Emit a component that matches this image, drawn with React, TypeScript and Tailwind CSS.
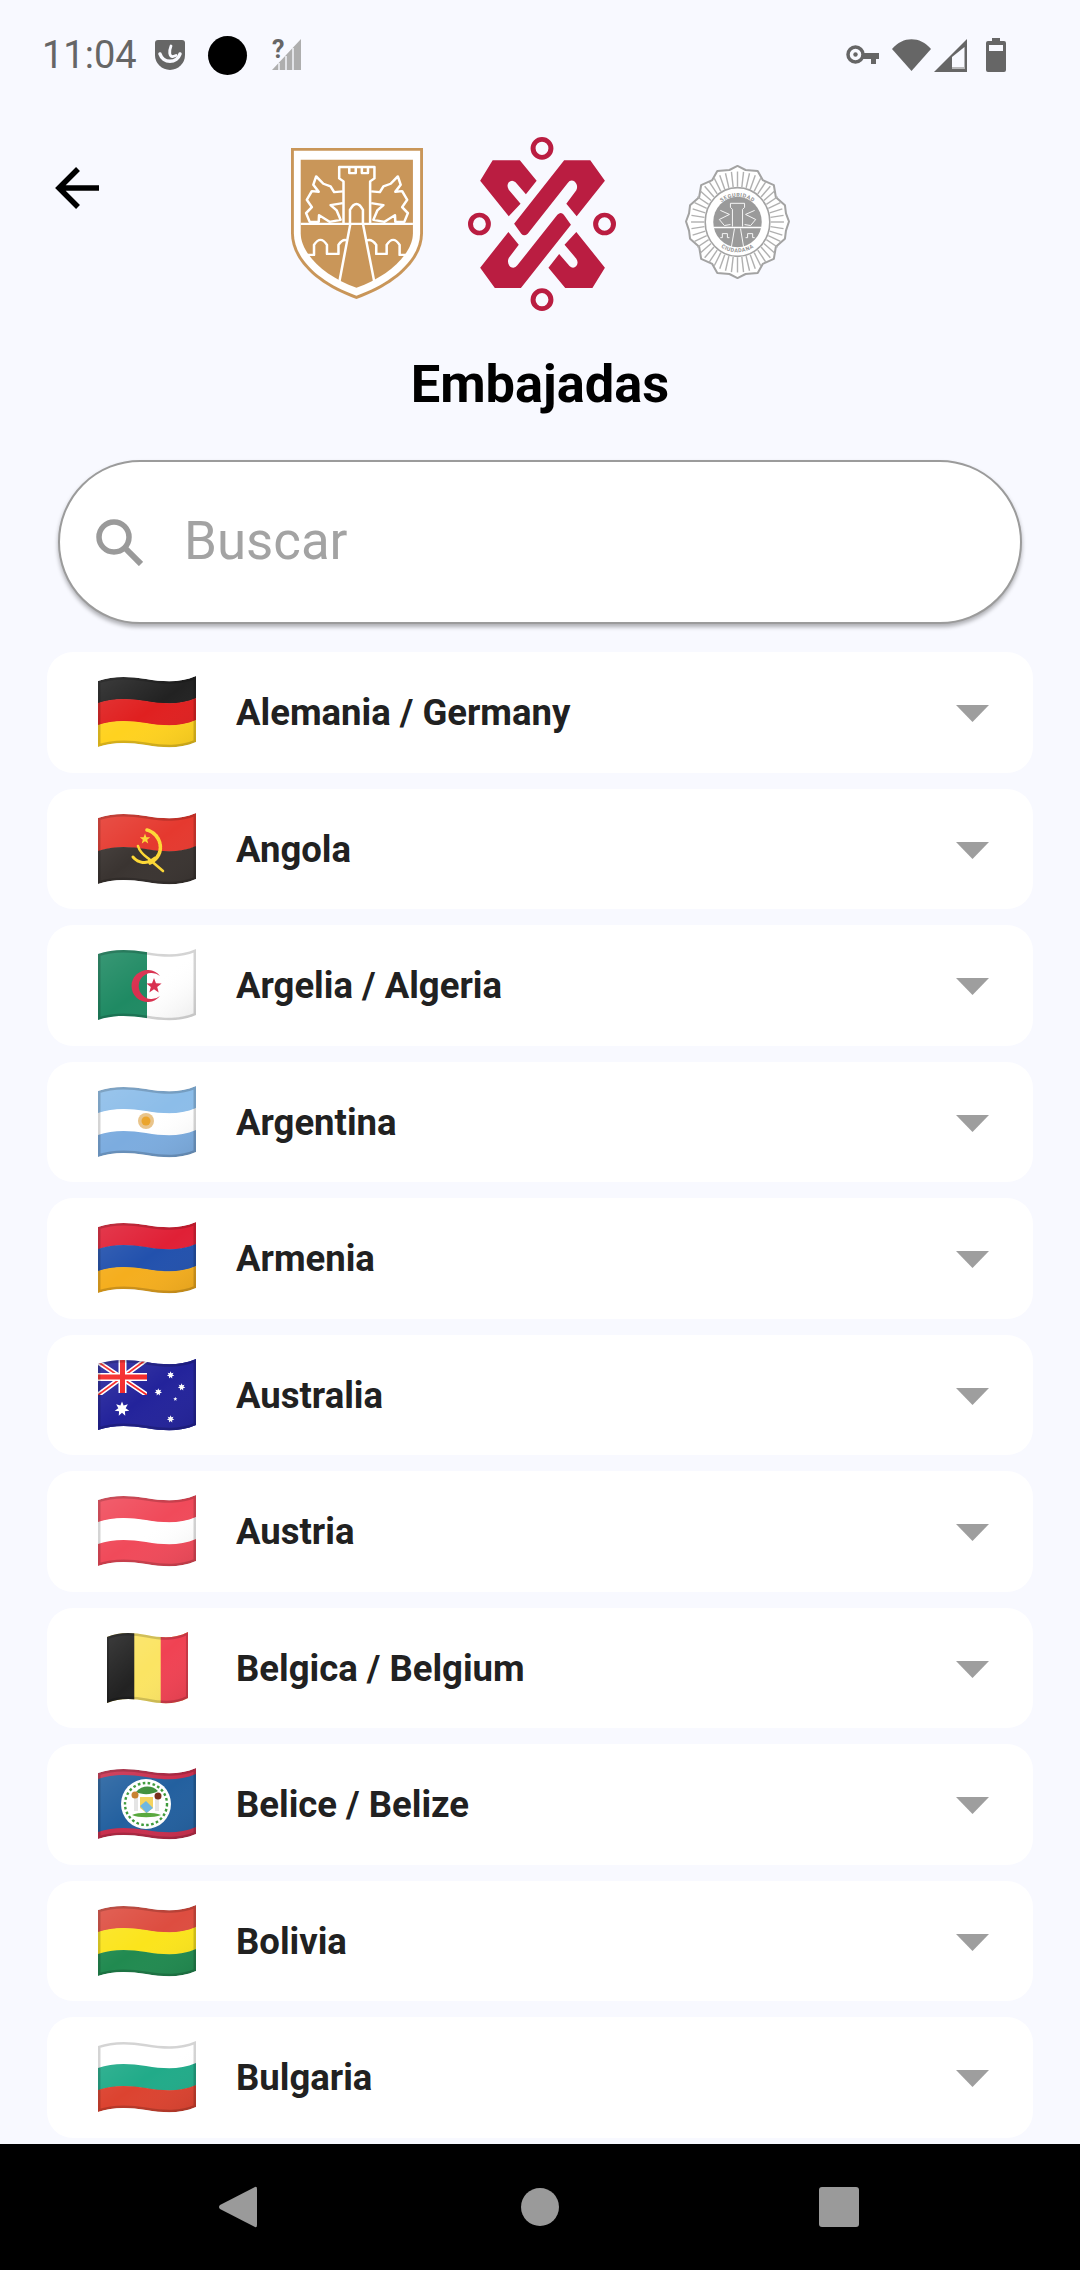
import type { ReactNode } from "react";

const waveBand = (a: number, b: number) =>
  `M0 ${a + 5} C14 ${a} 30 ${a} 48 ${a + 3} S82 ${a + 7} 98 ${a} L98 ${b} C82 ${b + 7} 66 ${b + 6} 48 ${b + 3} C30 ${b} 14 ${b} 0 ${b + 5} Z`;

const FLAG_OUTLINE = waveBand(0, 66);

const starPoints = (cx: number, cy: number, r: number, n = 5, inner = 0.42) =>
  Array.from({ length: n * 2 }, (_, i) => {
    const rad = i % 2 === 0 ? r : r * inner;
    const a = (Math.PI * i) / n - Math.PI / 2;
    return `${(cx + rad * Math.cos(a)).toFixed(2)},${(cy + rad * Math.sin(a)).toFixed(2)}`;
  }).join(" ");

function Flag({ id, narrow, children }: { id: string; narrow?: boolean; children: ReactNode }) {
  return (
    <div className="w-[98px] h-[72px] shrink-0 flex justify-center">
      <svg width={narrow ? 81 : 98} height={72} viewBox="0 0 98 72" preserveAspectRatio="none">
        <defs>
          <clipPath id={`clip-${id}`}>
            <path d={FLAG_OUTLINE} />
          </clipPath>
          <linearGradient id={`sheen-${id}`} x1="0" y1="0" x2="1" y2="1">
            <stop offset="0" stopColor="#ffffff" stopOpacity="0.12" />
            <stop offset="0.5" stopColor="#ffffff" stopOpacity="0" />
            <stop offset="1" stopColor="#000000" stopOpacity="0.08" />
          </linearGradient>
        </defs>
        <g clipPath={`url(#clip-${id})`}>
          {children}
          <rect width="98" height="72" fill={`url(#sheen-${id})`} />
          <path d={FLAG_OUTLINE} fill="none" stroke="#000000" strokeOpacity="0.17" strokeWidth="5" />
        </g>
      </svg>
    </div>
  );
}

function Stripes({ colors }: { colors: string[] }) {
  const h = 66 / colors.length;
  return (
    <>
      {colors.map((c, i) => (
        <path key={i} d={waveBand(i * h, (i + 1) * h + (i < colors.length - 1 ? 0.5 : 0))} fill={c} />
      ))}
    </>
  );
}

const flags: Record<string, ReactNode> = {
  de: (
    <Flag id="de">
      <Stripes colors={["#222222", "#e02020", "#ffd21f"]} />
    </Flag>
  ),
  ao: (
    <Flag id="ao">
      <Stripes colors={["#e5392f", "#3a3431"]} />
      <g fill="none" stroke="#fdd835" strokeLinecap="round">
        <path d="M49 17 C60 20 65 32 61 41 C59 45 56 48 52 50" strokeWidth="3.6" strokeDasharray="2.6 0.8" />
        <path d="M40 33 C42 40 47 43 51 46 L65 58" strokeWidth="2.6" />
        <path d="M35 44 C40 50 48 52 57 45" strokeWidth="3" strokeDasharray="2.6 0.8" />
      </g>
      <polygon points={starPoints(47, 26, 5.5)} fill="#fdd835" />
    </Flag>
  ),
  dz: (
    <Flag id="dz">
      <rect width="98" height="72" fill="#ffffff" />
      <rect width="49" height="72" fill="#1f8a63" />
      <path d="M62 27 A16 16 0 1 0 62 47 A13 13 0 1 1 62 27 Z" fill="#d9304f" />
      <polygon points={starPoints(56, 37, 8)} fill="#d9304f" />
    </Flag>
  ),
  ar: (
    <Flag id="ar">
      <Stripes colors={["#8cbde9", "#ffffff", "#7cacdf"]} />
      <circle cx="48" cy="35" r="8" fill="#e9c48a" />
      <circle cx="48" cy="35" r="4.5" fill="#eba52c" />
    </Flag>
  ),
  am: (
    <Flag id="am">
      <Stripes colors={["#e02036", "#2251ad", "#f5ae1e"]} />
    </Flag>
  ),
  au: (
    <Flag id="au">
      <rect width="98" height="72" fill="#23239b" />
      <g stroke="#ffffff" strokeWidth="5">
        <path d="M0 3 L49 36 M49 0 L0 36" />
      </g>
      <g stroke="#f52525" strokeWidth="1.8">
        <path d="M0 3 L49 36 M49 0 L0 36" />
      </g>
      <rect x="49" y="0" width="49" height="72" fill="#23239b" />
      <rect y="36" width="49" height="36" fill="#23239b" />
      <path d="M24.5 0 V34 M0 18 H49" stroke="#ffffff" strokeWidth="8" />
      <path d="M24.5 0 V34 M0 18 H49" stroke="#f52525" strokeWidth="5" />
      <polygon points={starPoints(24, 50, 7.5, 7, 0.5)} fill="#ffffff" />
      <polygon points={starPoints(72.6, 16, 3.8, 7, 0.5)} fill="#ffffff" />
      <polygon points={starPoints(83.6, 28, 3.8, 7, 0.5)} fill="#ffffff" />
      <polygon points={starPoints(60.3, 33, 3.8, 7, 0.5)} fill="#ffffff" />
      <polygon points={starPoints(77.3, 40, 2.2, 5)} fill="#ffffff" />
      <polygon points={starPoints(72.6, 60, 3.8, 7, 0.5)} fill="#ffffff" />
    </Flag>
  ),
  at: (
    <Flag id="at">
      <Stripes colors={["#f04a5a", "#ffffff", "#f04a5a"]} />
    </Flag>
  ),
  be: (
    <Flag id="be" narrow>
      <rect width="98" height="72" fill="#fbe463" />
      <rect width="33" height="72" fill="#222222" />
      <rect x="65" width="33" height="72" fill="#f04253" />
    </Flag>
  ),
  bz: (
    <Flag id="bz">
      <path d={waveBand(0, 66)} fill="#c92f4e" />
      <path d={waveBand(6, 59)} fill="#23609f" />
      <circle cx="48" cy="36" r="25" fill="#ffffff" />
      <circle cx="48" cy="36" r="21" fill="none" stroke="#3d9a3a" strokeWidth="2.4" strokeDasharray="2.6 2.4" />
      <path d="M38 24 C44 17 54 17 60 23 C54 27 44 27 38 24 Z" fill="#3f8f3c" />
      <rect x="36" y="27" width="4" height="16" fill="#e4e4e4" />
      <rect x="57" y="27" width="4" height="16" fill="#e4e4e4" />
      <circle cx="37" cy="27" r="3.5" fill="#c77f2b" />
      <circle cx="60" cy="28" r="3.5" fill="#7a2f1c" />
      <path d="M42 29 H55 V40 L48.5 45 L42 40 Z" fill="#f4d35e" />
      <path d="M42 38 L48 33 L55 40 L48.5 45 Z" fill="#6fb7e0" />
      <path d="M34 47 C40 44 56 44 63 47 C56 50 40 50 34 47 Z" fill="#58a83c" />
    </Flag>
  ),
  bo: (
    <Flag id="bo">
      <Stripes colors={["#dd4d40", "#fbe41c", "#218a50"]} />
    </Flag>
  ),
  bg: (
    <Flag id="bg">
      <Stripes colors={["#ffffff", "#21ab89", "#dc4330"]} />
    </Flag>
  ),
};

const embassies = [
  { code: "de", name: "Alemania / Germany" },
  { code: "ao", name: "Angola" },
  { code: "dz", name: "Argelia / Algeria" },
  { code: "ar", name: "Argentina" },
  { code: "am", name: "Armenia" },
  { code: "au", name: "Australia" },
  { code: "at", name: "Austria" },
  { code: "be", name: "Belgica / Belgium" },
  { code: "bz", name: "Belice / Belize" },
  { code: "bo", name: "Bolivia" },
  { code: "bg", name: "Bulgaria" },
];

function StatusBar() {
  return (
    <div className="h-[110px] shrink-0 flex items-start justify-between pt-[38px] pl-[42px] pr-[74px]">
      <div className="flex items-center h-[34px]">
        <span className="w-[95px] text-[38px] leading-none text-[#666666]">11:04</span>
        <svg className="ml-[18px]" width="30" height="30" viewBox="0 0 30 30">
          <path d="M0 3 Q0 0 3 0 H27 Q30 0 30 3 V15 A15 15 0 0 1 0 15 Z" fill="#666666" />
          <path d="M5 14 A10.5 10.5 0 0 0 25 14" fill="none" stroke="#f8f9ff" strokeWidth="3.5" strokeLinecap="round" />
          <path d="M16 6 C14 11 14 17 18 16.5 L21 15.5" fill="none" stroke="#f8f9ff" strokeWidth="2.8" strokeLinecap="round" />
        </svg>
        <div className="ml-[23px] w-[39px] h-[39px] rounded-full bg-black" />
        <svg className="ml-[25px] overflow-visible" width="29" height="32" viewBox="0 0 29 32">
          <path d="M0 31 L29 0 V31 Z" fill="#aeaeae" />
          <path d="M7 31 V24 M14 31 V17 M21 31 V9" stroke="#f8f9ff" strokeWidth="1.4" />
          <text x="0" y="19" fontSize="25" fontWeight="700" fill="#666666" fontFamily="Roboto, sans-serif">?</text>
        </svg>
      </div>
      <div className="flex items-center h-[34px]">
        <svg width="33" height="20" viewBox="0 0 33 20">
          <circle cx="9.5" cy="9.5" r="7.5" fill="none" stroke="#666666" strokeWidth="3.5" />
          <circle cx="9.5" cy="9.5" r="2.2" fill="#666666" />
          <path d="M16 8 H33 V14 H30 V19 H25 V14 H16 Z" fill="#666666" />
        </svg>
        <svg className="ml-[13px]" width="39" height="32" viewBox="0 0 39 32">
          <path d="M0 10 C11 -3 28 -3 39 10 L19.5 32 Z" fill="#666666" />
        </svg>
        <svg className="ml-[3px]" width="33" height="33" viewBox="0 0 33 33">
          <path d="M0 33 L33 0 V33 Z" fill="#666666" />
          <path d="M18 18 L30.5 8 V30 H18 Z" fill="#f8f9ff" />
          <path d="M18 28 H30.5 V30 H18 Z" fill="#b9b9bb" />
        </svg>
        <svg className="ml-[19px]" width="20" height="34" viewBox="0 0 20 34">
          <path d="M6 0 H14 V3 H18 Q20 3 20 5 V32 Q20 34 18 34 H2 Q0 34 0 32 V5 Q0 3 2 3 H6 Z" fill="#666666" />
          <rect x="3" y="7" width="14" height="6" fill="#f8f9ff" />
        </svg>
      </div>
    </div>
  );
}

function ShieldLogo() {
  const griffin =
    "M232 215 L208 217 L198 200 L178 192 L158 170 L150 195 L165 216 L146 214 L132 240 L146 262 L130 280 L140 306 L165 306 L166 286 L195 306 L226 300 L215 272 L198 256 L232 250";
  return (
    <svg className="mt-[38px] shrink-0" width="132" height="151" viewBox="88 85 367 452" preserveAspectRatio="none">
      <path d="M88 85 H455 V340 C455 420 380 495 270 537 C160 495 88 420 88 340 Z" fill="#c99659" />
      <path d="M96 93 H447 V340 C447 415 375 487 270 527 C165 487 96 415 96 340 Z" fill="#ffffff" />
      <path d="M115 120 H427 V340 C427 400 360 470 270 503 C180 470 115 400 115 340 Z" fill="#c99659" />
      <g fill="none" stroke="#ffffff" strokeWidth="7" strokeLinejoin="round">
        <path d="M115 312 H427" />
        <path d="M234 310 V185 L222 176 V142 H320 V176 L308 185 V310" />
        <path d="M250 142 V160 H268 V142 M285 142 V160 H302 V142" />
        <path d="M252 310 V270 Q270 235 288 270 V310" />
        <path d="M253 312 L222 488 M288 312 L320 488" />
        <path d={griffin} />
        <path d={griffin} transform="translate(543 0) scale(-1 1)" />
        <path d="M130 405 H152 V375 Q170 345 188 375 V402 H220 V375 Q232 355 245 362" />
        <path d="M415 405 H390 V375 Q372 345 354 375 V402 H325 V375 Q312 355 298 362" />
      </g>
    </svg>
  );
}

function CdmxLogo() {
  const hook = "M617 181 L652 120 H728 L775 181 L745 222 L716 186 Q706 176 697 186 Q690 196 697 208 L730 250 L697 288 Z";
  const strip = "M712 310 L852 120 H925 L966 181 L887 288 L858 250 L886 210 Q892 196 882 184 Q870 176 862 188 L750 340 Q740 350 732 340 Z";
  return (
    <svg className="mt-[27px] shrink-0" width="148" height="174" viewBox="583 50 414 522" preserveAspectRatio="none">
      <g fill="#ba1d41">
        <path d={hook} />
        <path d={strip} />
        <g transform="rotate(180 791.5 311.5)">
          <path d={hook} />
          <path d={strip} />
        </g>
      </g>
      <g fill="none" stroke="#ba1d41" strokeWidth="14">
        <ellipse cx="790" cy="84" rx="25" ry="27" />
        <ellipse cx="790" cy="538" rx="25" ry="27" />
        <ellipse cx="615" cy="311" rx="25" ry="27" />
        <ellipse cx="965" cy="311" rx="25" ry="27" />
      </g>
    </svg>
  );
}

function BadgeLogo() {
  const rays = Array.from({ length: 48 }, (_, i) => (i * Math.PI * 2) / 48);
  return (
    <svg className="mt-[54px] shrink-0" width="105" height="116" viewBox="0 0 104 113">
      <defs>
        <path id="badge-top" d="M26.5 57 A25.5 25.5 0 0 1 77.5 57" />
        <path id="badge-bottom" d="M22.5 57 A29.5 29.5 0 0 0 81.5 57" />
      </defs>
      <path
        d="M52 1 L60 5 L72 6 L77 15 L88 20 L90 32 L99 40 L100 48 L103 56 L100 65 L99 73 L90 81 L88 93 L77 98 L72 107 L60 108 L52 112 L44 108 L32 107 L27 98 L16 93 L14 81 L5 73 L4 65 L1 56 L4 48 L5 40 L14 32 L16 20 L27 15 L32 6 L44 5 Z"
        fill="#ffffff"
        stroke="#a3a3a3"
        strokeWidth="2"
        strokeLinejoin="round"
      />
      <g stroke="#b0b0b0" strokeWidth="1.4">
        {rays.map((a) => (
          <line
            key={a}
            x1={52 + 33 * Math.cos(a)}
            y1={56.5 + 35 * Math.sin(a)}
            x2={52 + 46 * Math.cos(a)}
            y2={56.5 + 50 * Math.sin(a)}
          />
        ))}
      </g>
      <ellipse cx="52" cy="56.5" rx="32" ry="34" fill="#ffffff" stroke="#a3a3a3" strokeWidth="1.6" />
      <ellipse cx="52" cy="56.5" rx="24" ry="25" fill="#9a9a9a" />
      <path d="M28 62 H76" stroke="#ffffff" strokeWidth="1.5" />
      <g fill="none" stroke="#ffffff" strokeWidth="0.9">
        <path d="M47 61 V44 L45 42 V38 H59 V42 L57 44 V61" />
        <path d="M49 63 L46 81 M55 63 L58 81" />
        <path d="M35 72 H37 V68 H42 V72 H44 M60 72 H62 V68 H67 V72 H69" />
        <path d="M35 45 L44 49 L34 54 L39 60 L45 59 M69 45 L60 49 L70 54 L65 60 L59 59" />
      </g>
      <text fontSize="5.4" fontWeight="700" fill="#8f8f8f" fontFamily="Roboto, sans-serif" letterSpacing="0.5">
        <textPath href="#badge-top" startOffset="50%" textAnchor="middle">SEGURIDAD</textPath>
      </text>
      <text fontSize="5.4" fontWeight="700" fill="#8f8f8f" fontFamily="Roboto, sans-serif" letterSpacing="0.5">
        <textPath href="#badge-bottom" startOffset="50%" textAnchor="middle">CIUDADANA</textPath>
      </text>
    </svg>
  );
}

export default function App() {
  return (
    <div className="h-[2270px] w-[1080px] overflow-hidden flex flex-col bg-[#f8f9ff] font-['Roboto',sans-serif]">
      <StatusBar />

      {/* Header */}
      <div className="shrink-0 flex items-start pl-[55px]">
        <svg className="mt-[56px] shrink-0" width="46" height="44" viewBox="0 0 46 44">
          <path d="M44 22 H4 M23 3 L4 22 L23 41" fill="none" stroke="#000000" strokeWidth="5.5" />
        </svg>
        <div className="ml-[190px] flex items-start">
          <ShieldLogo />
          <div className="ml-[45px]">
            <CdmxLogo />
          </div>
          <div className="ml-[69px]">
            <BadgeLogo />
          </div>
        </div>
      </div>
      <h1 className="mt-[43px] text-center text-[52.4px] leading-[60px] font-bold text-black">Embajadas</h1>

      {/* Search */}
      <div className="mt-[46px] mx-[58px] h-[164px] shrink-0 rounded-[82px] border-[2.5px] border-[#9b9b9b] bg-white shadow-[0_3px_4px_rgba(0,0,0,0.3)] flex items-center pl-[35px]">
        <svg width="48" height="48" viewBox="0 0 48 48" className="shrink-0">
          <circle cx="19" cy="19" r="15" fill="none" stroke="#9a9a9a" strokeWidth="5.5" />
          <path d="M29.5 29.5 L46 46" stroke="#9a9a9a" strokeWidth="6" />
        </svg>
        <input
          placeholder="Buscar"
          className="ml-[41px] flex-1 min-w-0 bg-transparent outline-none text-[52.8px] placeholder:text-[#a3a3a3]"
        />
      </div>

      {/* List */}
      <div className="mt-[28px] mx-[47px] flex-1 min-h-0 overflow-hidden flex flex-col gap-[16px]">
        {embassies.map((e) => (
          <div
            key={e.code}
            className="h-[120.5px] shrink-0 rounded-[26px] bg-white flex items-center pl-[51px] pr-[44px]"
          >
            {flags[e.code]}
            <span className="ml-[40px] flex-1 text-[36.5px] leading-[44px] mt-[2px] font-bold text-[#212121]">{e.name}</span>
            <svg className="mt-[3px]" width="33" height="17" viewBox="0 0 33 17">
              <path d="M0 0 H33 L16.5 17 Z" fill="#9e9e9e" />
            </svg>
          </div>
        ))}
      </div>

      {/* Nav bar */}
      <div className="h-[126px] shrink-0 bg-black flex items-center">
        <svg className="ml-[219px]" width="38" height="42" viewBox="0 0 38 42">
          <path d="M36 1 Q38 0 38 3 V39 Q38 42 36 41 L1 23 Q-1 21 1 19 Z" fill="#9a9a9a" />
        </svg>
        <div className="ml-[264px] w-[38px] h-[38px] rounded-full bg-[#9a9a9a]" />
        <div className="ml-[260px] w-[40px] h-[40px] rounded-[3px] bg-[#9a9a9a]" />
      </div>
    </div>
  );
}
